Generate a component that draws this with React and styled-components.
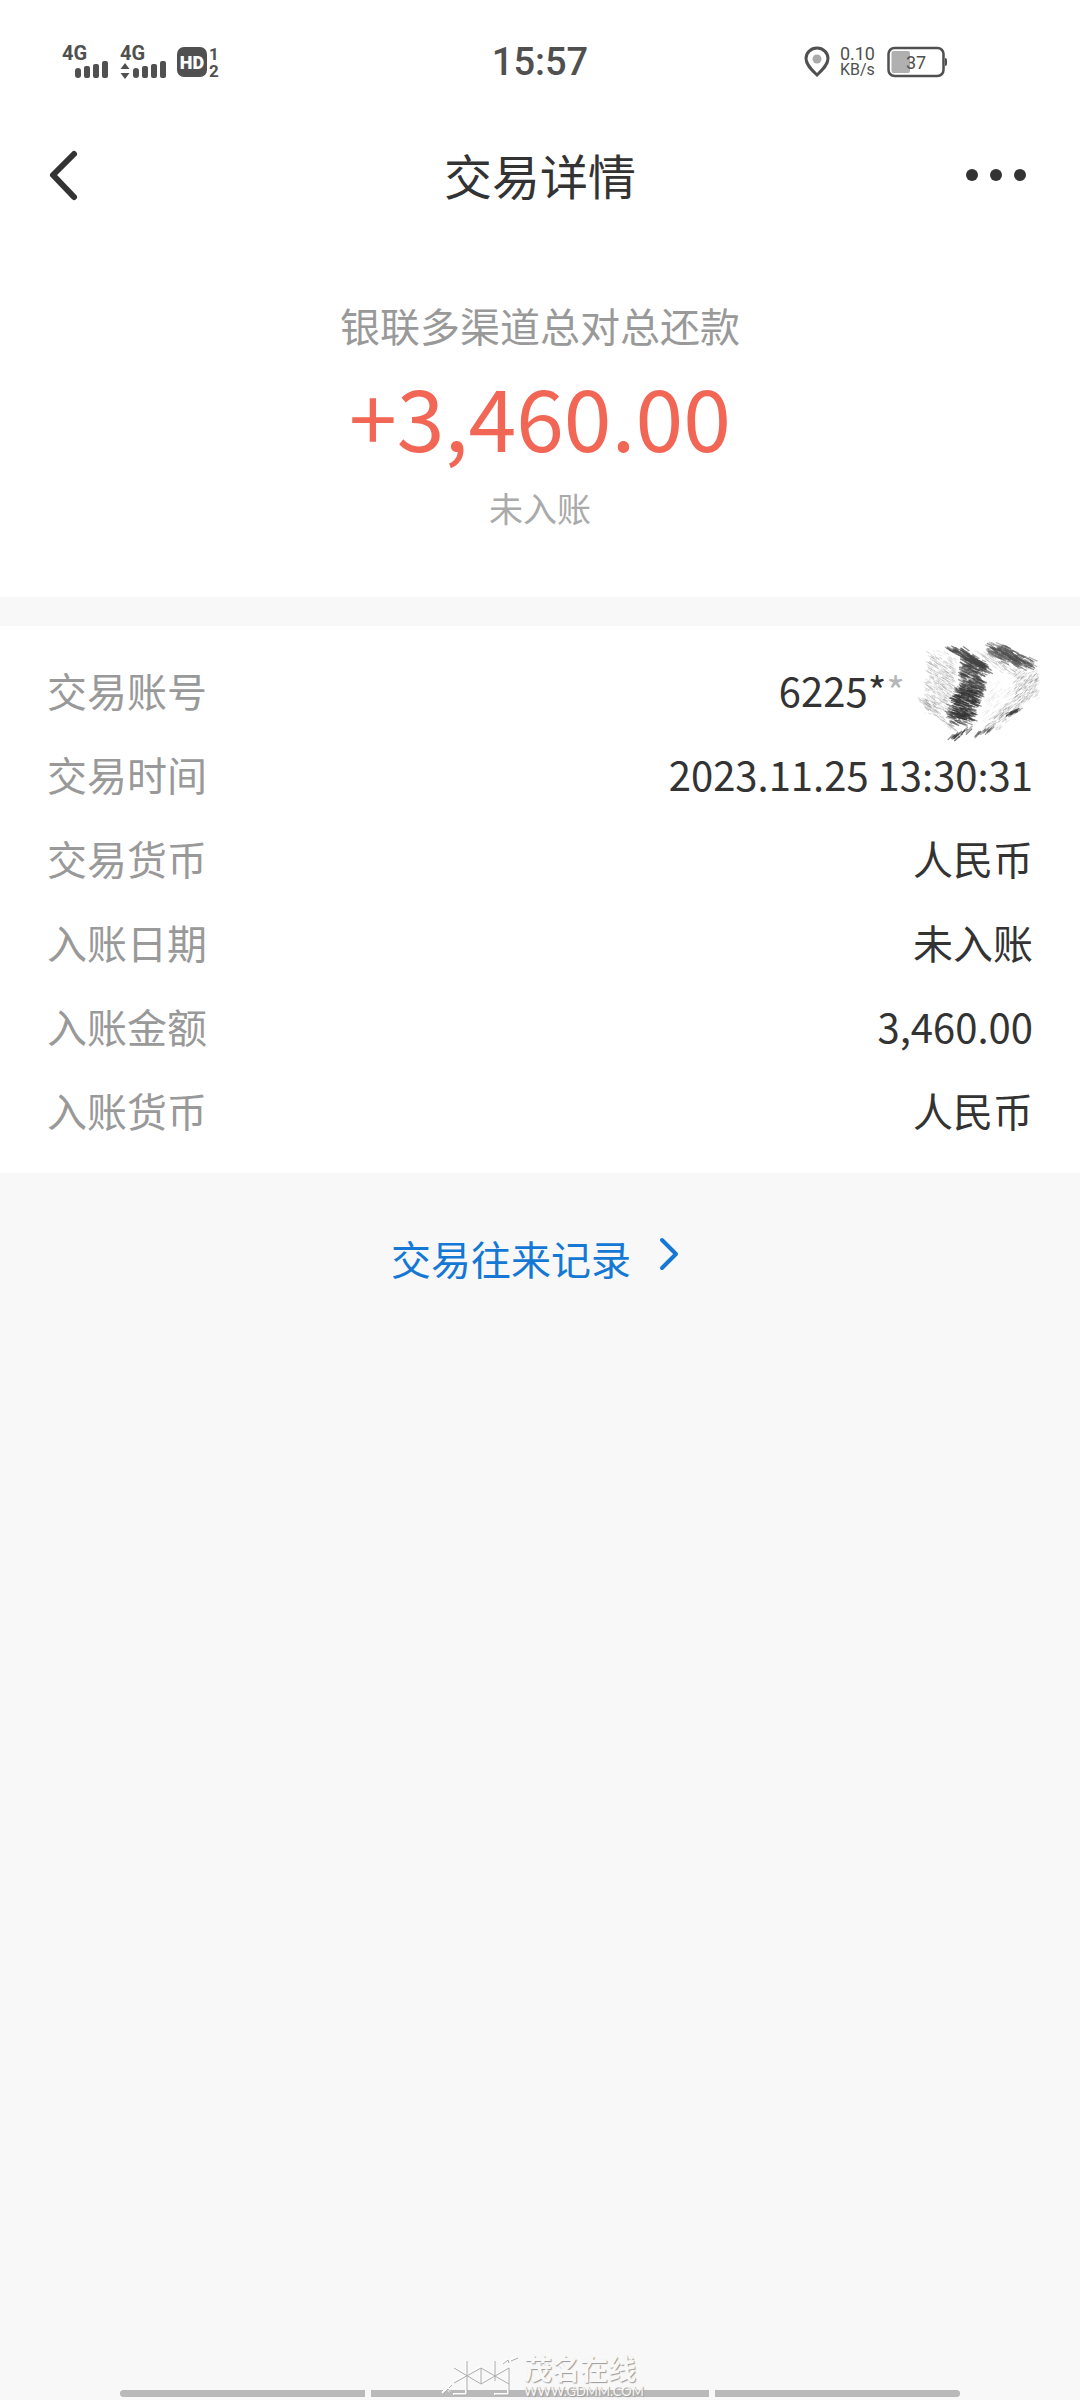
import React from 'react'
import styled, { createGlobalStyle, ThemeProvider } from 'styled-components'

const theme = {
    colors: {
        text: '#333333',
        label: '#999999',
        hint: '#aaaaaa',
        status: '#505050',
        amount: '#f26656',
        link: '#1478d4',
        page: '#f8f8f8',
        card: '#ffffff',
        navBar: '#b9b9b9',
    },
}

const GlobalStyle = createGlobalStyle`
    * { box-sizing: border-box; }

    body
    {
        margin: 0;
        background-color: ${({ theme }) => theme.colors.page};
        font-family: "Noto Sans CJK SC", "Noto Sans", sans-serif;
        color: ${({ theme }) => theme.colors.text};
    }

    h1, h2, p, dl, dt, dd { margin: 0; font-weight: 400; }
`

const Page = styled.div`
    display: flex;
    flex-direction: column;
    min-height: 100vh;
`

const StatusBar = styled.div`
    display: grid;
    grid-template-columns: 1fr auto 1fr;
    align-items: center;
    height: 124px;
    padding: 0 132px 0 60px;
    background-color: ${({ theme }) => theme.colors.card};
    color: ${({ theme }) => theme.colors.status};
    font-family: Roboto, sans-serif;
`

const StatusGroup = styled.div`
    display: flex;
    align-items: center;
    gap: 10px;
    justify-content: ${({ $end }) => $end ? 'flex-end' : 'flex-start'};
`

const Clock = styled.time`
    padding-left: 72px;
    font-size: 38px;
    font-weight: 500;
    line-height: 44px;
`

const Speed = styled.div`
    display: flex;
    flex-direction: column;
    padding-right: 2px;
    font-size: 18px;
    line-height: 16px;
`

const Unit = styled.span`
    font-size: 16px;
`

const Header = styled.header`
    display: grid;
    grid-template-columns: 1fr auto 1fr;
    align-items: center;
    height: 104px;
    padding: 0 48px;
    background-color: ${({ theme }) => theme.colors.card};
`

const Title = styled.h1`
    padding-bottom: 4px;
    font-size: 48px;
    line-height: 72px;
`

const IconButton = styled.button`
    display: flex;
    padding: 0;
    border: 0;
    background: none;
    color: inherit;
    cursor: pointer;
    justify-self: ${({ $end }) => $end ? 'end' : 'start'};
`

const Summary = styled.section`
    padding: 67px 48px 65px;
    background-color: ${({ theme }) => theme.colors.card};
    text-align: center;
`

const Merchant = styled.h2`
    font-size: 40px;
    line-height: 60px;
    color: ${({ theme }) => theme.colors.label};
`

const Amount = styled.p`
    margin-bottom: 9px;
    font-size: 86px;
    line-height: 120px;
    color: ${({ theme }) => theme.colors.amount};
`

const Hint = styled.p`
    font-size: 34px;
    line-height: 48px;
    color: ${({ theme }) => theme.colors.hint};
`

const Details = styled.dl`
    margin-top: 29px;
    padding: 22px 47px 21px;
    background-color: ${({ theme }) => theme.colors.card};
`

const Row = styled.div`
    display: flex;
    justify-content: space-between;
    font-size: 40px;
    line-height: 84px;
`

const Label = styled.dt`
    color: ${({ theme }) => theme.colors.label};
`

const Value = styled.dd`
    position: relative;
    padding-right: ${({ $masked }) => $masked ? '128px' : '0'};
`

const Faded = styled.span`
    opacity: 0.35;
`

const ScribbleSvg = styled.svg`
    position: absolute;
    top: -11px;
    right: -9px;
`

const RecordsLink = styled.a`
    display: flex;
    align-items: center;
    gap: 28px;
    align-self: center;
    margin-top: 55px;
    padding-right: 10px;
    font-size: 40px;
    line-height: 60px;
    color: ${({ theme }) => theme.colors.link};
    text-decoration: none;

    svg { margin-bottom: 8px; }
`

const BottomNav = styled.footer`
    position: relative;
    display: grid;
    grid-template-columns: 245fr 338fr 245fr;
    gap: 6px;
    margin-top: auto;
    padding: 0 120px 3px;
`

const NavSegment = styled.span`
    height: 7px;
    border-radius: ${({ $side }) => $side === 'left' ? '4px 0 0 4px' : $side === 'right' ? '0 4px 4px 0' : '0'};
    background-color: ${({ theme }) => theme.colors.navBar};
`

const Watermark = styled.div`
    position: absolute;
    left: 50%;
    bottom: 3px;
    transform: translateX(-50%);
    display: flex;
    align-items: flex-end;
    gap: 4px;
    color: #f8f8f8;
    text-shadow: 1px 1px 1px #9a9a9a;
`

const WatermarkText = styled.div`
    display: flex;
    flex-direction: column;
    gap: 3px;
    width: 116px;
`

const SiteName = styled.span`
    font-size: 28px;
    font-weight: 700;
    line-height: 28px;
`

const SiteUrl = styled.span`
    font-family: Lato, sans-serif;
    font-size: 13px;
    line-height: 12px;
    white-space: nowrap;
`

function Signal({ arrows })
{
    return (
        <svg width='48' height='44' viewBox='0 0 48 44' fill='currentColor'>
            <text x='2' y='20' fontSize='20' fontWeight='700'>4G</text>
            {arrows && <path d='M7 23l4.500 6h-9zM7 39l4.500-6h-9z' />}
            <rect x='15' y='28' width='6' height='10' rx='3' />
            <rect x='24' y='26' width='6' height='12' rx='2' />
            <rect x='33' y='24' width='6' height='14' rx='2' />
            <rect x='42' y='21' width='6' height='17' rx='2' />
        </svg>
    )
}

function HdBadge()
{
    return (
        <svg width='50' height='40' viewBox='0 0 50 40' fill='currentColor'>
            <rect x='1' y='5' width='30' height='30' rx='7' />
            <text x='16' y='27' fontSize='18' fontWeight='900' fill='#fff' textAnchor='middle'>HD</text>
            <text x='33' y='18' fontSize='17' fontWeight='700'>1</text>
            <text x='33' y='35' fontSize='17' fontWeight='700'>2</text>
        </svg>
    )
}

function Battery({ level })
{
    return (
        <svg width='61' height='32' viewBox='0 0 61 32'>
            <rect x='1.500' y='2' width='55' height='28' rx='6' fill='none' stroke='currentColor' strokeWidth='2.5' />
            <rect x='4.500' y='5' width={level / 2} height='22' rx='2' fill='#b0b0b0' />
            <path d='M58 12q2 0 2 2v4q0 2-2 2z' fill='currentColor' />
            <text x='29' y='22.500' fontSize='18' fill='currentColor' textAnchor='middle'>{level}</text>
        </svg>
    )
}

// brush patches: area along the segment x1,y1 -> x2,y2 with a spread across it
const patches = [
    { x1: 28, y1: 20, x2: 24, y2: 72, spread: 28, angle: 30, len: 6, count: 520, color: '#888888', opacity: 0.3, width: 1 },
    { x1: 42, y1: 12, x2: 70, y2: 32, spread: 14, angle: 30, len: 15, count: 110, color: '#484848', opacity: 0.75, width: 1.2 },
    { x1: 60, y1: 26, x2: 56, y2: 58, spread: 24, angle: 24, len: 10, count: 330, color: '#444444', opacity: 0.6, width: 1.2 },
    { x1: 54, y1: 54, x2: 46, y2: 84, spread: 24, angle: 20, len: 11, count: 330, color: '#333333', opacity: 0.65, width: 1.2 },
    { x1: 80, y1: 11, x2: 111, y2: 27, spread: 19, angle: 28, len: 11, count: 230, color: '#505050', opacity: 0.65, width: 1.2 },
    { x1: 70, y1: 16, x2: 98, y2: 36, spread: 14, angle: 32, len: 7, count: 90, color: '#999999', opacity: 0.35, width: 1 },
    { x1: 112, y1: 36, x2: 112, y2: 58, spread: 24, angle: -35, len: 5, count: 280, color: '#808080', opacity: 0.3, width: 1 },
    { x1: 110, y1: 58, x2: 76, y2: 92, spread: 15, angle: -38, len: 6, count: 200, color: '#808080', opacity: 0.35, width: 1 },
    { x1: 90, y1: 44, x2: 80, y2: 80, spread: 26, angle: -36, len: 6, count: 120, color: '#aaaaaa', opacity: 0.2, width: 1 },
    { x1: 95, y1: 78, x2: 103, y2: 72, spread: 6, angle: -30, len: 8, count: 30, color: '#404040', opacity: 0.7, width: 1.1 },
    { x1: 6, y1: 62, x2: 42, y2: 94, spread: 6, angle: 36, len: 8, count: 60, color: '#888888', opacity: 0.35, width: 1 },
    { x1: 38, y1: 101, x2: 54, y2: 92, spread: 7, angle: -45, len: 10, count: 20, color: '#333333', opacity: 0.75, width: 1.3 },
    { x1: 64, y1: 98, x2: 76, y2: 92, spread: 6, angle: -45, len: 10, count: 14, color: '#444444', opacity: 0.65, width: 1.2 },
]

function makeStrokes()
{
    let seed = 17
    const rand = () =>
    {
        seed = (seed * 16807) % 2147483647
        return seed / 2147483647
    }

    return patches.flatMap(p => Array.from({ length: p.count }, () =>
    {
        const t = rand()
        const cx = p.x1 + (p.x2 - p.x1) * t + (rand() - 0.5) * p.spread
        const cy = p.y1 + (p.y2 - p.y1) * t + (rand() - 0.5) * p.spread * 0.5
        const a = (p.angle + (rand() - 0.5) * 12) * Math.PI / 180
        const l = p.len * (0.2 + rand() * 0.8) / 2
        const dx = Math.cos(a) * l
        const dy = Math.sin(a) * l
        return {
            d: `M${(cx - dx).toFixed(1)} ${(cy - dy).toFixed(1)}L${(cx + dx).toFixed(1)} ${(cy + dy).toFixed(1)}`,
            color: p.color,
            width: p.width,
            opacity: p.opacity * (0.5 + rand() * 0.5),
        }
    }))
}

const strokes = makeStrokes()

function Scribble()
{
    return (
        <ScribbleSvg width='128' height='110' viewBox='0 0 128 110' aria-hidden='true'>
            {strokes.map((s, i) => (
                <path key={i} d={s.d} stroke={s.color} strokeWidth={s.width} strokeOpacity={s.opacity} />
            ))}
        </ScribbleSvg>
    )
}

function WatermarkLogo()
{
    const lines = 'M26 3v34H13M40 10v16M54 3v20M68 10v27H54M13 10l27 16 28-16M13 25l27-15 28 16M2 36l5-5 3 4M8 30l3-3M62 6l5-4 1 3M70 3l7-3'
    return (
        <svg width='80' height='40' viewBox='0 0 80 40' fill='none'>
            <path d={lines} stroke='#fdfdfd' strokeWidth='2' />
            <path d={lines} stroke='#ababab' strokeWidth='1' transform='translate(1 1)' />
        </svg>
    )
}

const rows = [
    { label: '交易账号', value: '6225*', masked: true },
    { label: '交易时间', value: '2023.11.25 13:30:31' },
    { label: '交易货币', value: '人民币' },
    { label: '入账日期', value: '未入账' },
    { label: '入账金额', value: '3,460.00' },
    { label: '入账货币', value: '人民币' },
]

export default function App()
{
    return (
        <ThemeProvider theme={theme}>
            <GlobalStyle />
            <Page>
                <StatusBar>
                    <StatusGroup>
                        <Signal />
                        <Signal arrows />
                        <HdBadge />
                    </StatusGroup>
                    <Clock>15:57</Clock>
                    <StatusGroup $end>
                        <svg width='26' height='32' viewBox='0 0 26 32'>
                            <path d='M13 29C8 24 2 19 2 12.500a11 10.500 0 0 1 22 0C24 19 18 24 13 29z' fill='none' stroke='currentColor' strokeWidth='3' />
                            <circle cx='13' cy='13' r='4.500' fill='#aaa' />
                        </svg>
                        <Speed>
                            <span>0.10</span>
                            <Unit>KB/s</Unit>
                        </Speed>
                        <Battery level={37} />
                    </StatusGroup>
                </StatusBar>
                <Header>
                    <IconButton aria-label='返回'>
                        <svg width='32' height='54' viewBox='0 0 32 54' fill='none' stroke='currentColor' strokeWidth='6' strokeLinecap='round' strokeLinejoin='round'>
                            <path d='M26 5L5 26L26 48' />
                        </svg>
                    </IconButton>
                    <Title>交易详情</Title>
                    <IconButton aria-label='更多' $end>
                        <svg width='66' height='16' viewBox='0 0 66 16' fill='currentColor'>
                            <circle cx='6' cy='7' r='6' />
                            <circle cx='30' cy='7' r='6' />
                            <circle cx='54' cy='7' r='6' />
                        </svg>
                    </IconButton>
                </Header>
                <Summary>
                    <Merchant>银联多渠道总对总还款</Merchant>
                    <Amount>+3,460.00</Amount>
                    <Hint>未入账</Hint>
                </Summary>
                <Details>
                    {rows.map(({ label, value, masked }) => (
                        <Row key={label}>
                            <Label>{label}</Label>
                            <Value $masked={masked}>
                                {value}
                                {masked && <Faded>*</Faded>}
                                {masked && <Scribble />}
                            </Value>
                        </Row>
                    ))}
                </Details>
                <RecordsLink href='#records'>
                    交易往来记录
                    <svg width='20' height='34' viewBox='0 0 20 34' fill='none' stroke='currentColor' strokeWidth='4' strokeLinecap='round' strokeLinejoin='round'>
                        <path d='M3 3L17 17L3 31' />
                    </svg>
                </RecordsLink>
                <BottomNav>
                    <NavSegment $side='left' />
                    <NavSegment />
                    <NavSegment $side='right' />
                    <Watermark>
                        <WatermarkLogo />
                        <WatermarkText>
                            <SiteName>茂名在线</SiteName>
                            <SiteUrl>WWW.GDMM.COM</SiteUrl>
                        </WatermarkText>
                    </Watermark>
                </BottomNav>
            </Page>
        </ThemeProvider>
    )
}
